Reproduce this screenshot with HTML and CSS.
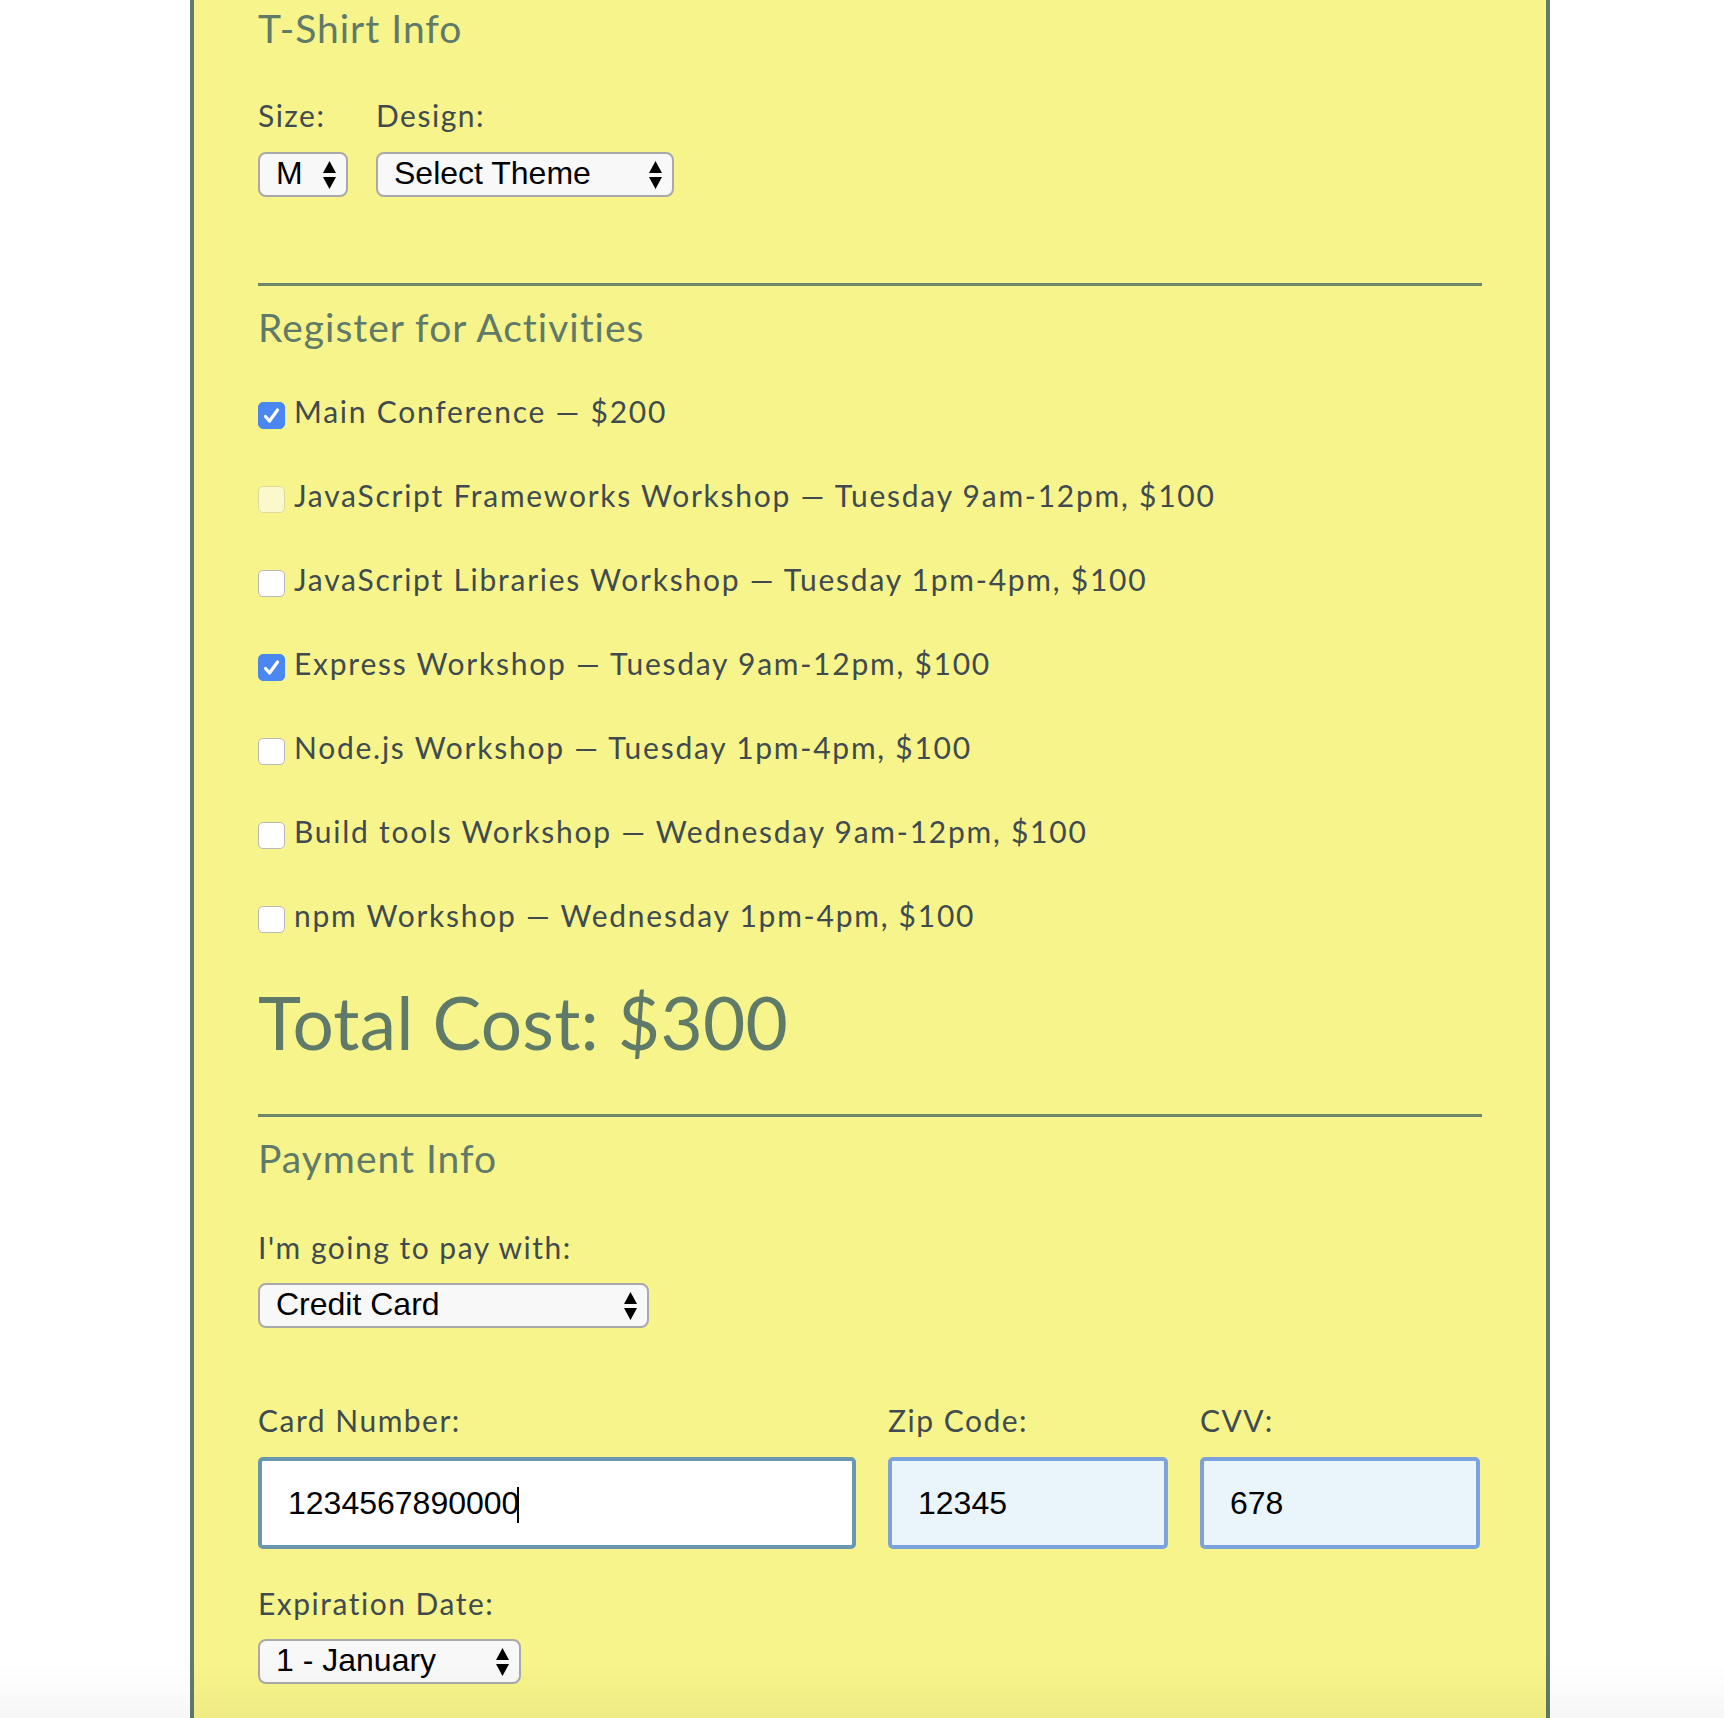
FILE: index.html
```html
<!DOCTYPE html>
<html lang="en">
<head>
<meta charset="utf-8">
<title>Registration Form</title>
<link rel="stylesheet" href="styles.css">
</head>
<body>
<form class="container">
  <div class="section">
    <h2 class="heading">T-Shirt Info</h2>
    <div class="shirt-row">
      <div class="field">
        <label class="label" for="size">Size:</label>
        <select class="select select-size" id="size"><option>M</option></select>
      </div>
      <div class="field">
        <label class="label" for="design">Design:</label>
        <select class="select select-design" id="design"><option>Select Theme</option></select>
      </div>
    </div>
  </div>

  <hr class="rule rule-first">

  <div class="section">
    <h2 class="heading">Register for Activities</h2>
    <div class="activities">
      <label class="activity"><input class="check" type="checkbox" checked><span>Main Conference — $200</span></label>
      <label class="activity"><input class="check" type="checkbox" disabled><span>JavaScript Frameworks Workshop — Tuesday 9am-12pm, $100</span></label>
      <label class="activity"><input class="check" type="checkbox"><span>JavaScript Libraries Workshop — Tuesday 1pm-4pm, $100</span></label>
      <label class="activity"><input class="check" type="checkbox" checked><span>Express Workshop — Tuesday 9am-12pm, $100</span></label>
      <label class="activity"><input class="check" type="checkbox"><span>Node.js Workshop — Tuesday 1pm-4pm, $100</span></label>
      <label class="activity"><input class="check" type="checkbox"><span>Build tools Workshop — Wednesday 9am-12pm, $100</span></label>
      <label class="activity"><input class="check" type="checkbox"><span>npm Workshop — Wednesday 1pm-4pm, $100</span></label>
    </div>
    <p class="total">Total Cost: $300</p>
  </div>

  <hr class="rule rule-second">

  <div class="section">
    <h2 class="heading">Payment Info</h2>
    <label class="label pay-label" for="payment">I'm going to pay with:</label>
    <select class="select select-payment" id="payment"><option>Credit Card</option></select>

    <div class="card-grid">
      <label class="label" for="cc-num">Card Number:</label>
      <label class="label" for="zip">Zip Code:</label>
      <label class="label" for="cvv">CVV:</label>
      <div class="input-wrap">
        <input class="text-input input-focus" id="cc-num" type="text" value="1234567890000">
        <span class="caret"></span>
      </div>
      <input class="text-input input-filled" id="zip" type="text" value="12345">
      <input class="text-input input-filled" id="cvv" type="text" value="678">
    </div>

    <label class="label exp-label" for="exp-month">Expiration Date:</label>
    <select class="select select-exp" id="exp-month"><option>1 - January</option></select>
  </div>
</form>
<div class="screen-shade"></div>
</body>
</html>
```

FILE: styles.css
```css
* {
  box-sizing: border-box;
}

html, body {
  margin: 0;
  padding: 0;
  background: #ffffff;
  height: 100%;
  overflow: hidden;
}

body {
  font-family: "Lato", "Open Sans", sans-serif;
  color: #3f4b50;
}

.container {
  width: 1360px;
  min-height: 1718px;
  margin-left: 190px;
  padding: 5px 64px 0;
  background: #f7f48b;
  border-left: 4px solid #617a6b;
  border-right: 4px solid #617a6b;
}

.heading {
  margin: 0;
  font-size: 39px;
  line-height: 46px;
  font-weight: 400;
  letter-spacing: 1px;
  color: #607a69;
}

.label {
  display: block;
  font-size: 30px;
  line-height: 36px;
  letter-spacing: 1.5px;
  color: #3f4b50;
}

.shirt-row {
  display: flex;
  gap: 28px;
  margin-top: 46px;
}

.field {
  display: flex;
  flex-direction: column;
  align-items: flex-start;
}

.select {
  appearance: none;
  -webkit-appearance: none;
  height: 45px;
  margin-top: 19px;
  padding: 0 30px 3px 16px;
  font-family: "Liberation Sans", Arial, sans-serif;
  font-size: 32px;
  letter-spacing: 0;
  color: #000;
  background-color: #f8f8f8;
  background-image: url("data:image/svg+xml;utf8,<svg xmlns='http://www.w3.org/2000/svg' width='13' height='28' viewBox='0 0 13 28'><path d='M6.5 0 L13 12 L0 12 Z M0 16 L13 16 L6.5 28 Z' fill='black'/></svg>");
  background-repeat: no-repeat;
  background-position: right 10px center;
  background-size: 13px 28px;
  border: 2px solid #a9a9a9;
  border-radius: 8px;
}

.select-size { width: 90px; }
.select-design { width: 298px; }
.select-payment { width: 391px; margin-top: 18px; }
.select-exp { width: 263px; margin-top: 18px; }

.rule {
  border: 0;
  border-top: 3px solid #6f876a;
  height: 0;
  margin: 0 0 18px;
}

.rule-first { margin-top: 86px; }
.rule-second { margin-top: 48px; }

.activities {
  display: flex;
  flex-direction: column;
  gap: 48px;
  margin-top: 43px;
}

.activity {
  display: flex;
  align-items: flex-start;
  gap: 9px;
  font-size: 30px;
  line-height: 36px;
  letter-spacing: 1.75px;
  color: #3f4b50;
}

.check {
  appearance: none;
  -webkit-appearance: none;
  flex: none;
  width: 27px;
  height: 27px;
  margin: 9px 0 0;
  border: 1.5px solid #b8b8b8;
  border-radius: 5px;
  background: #ffffff;
}

.check:checked {
  border-color: #4a87f2;
  background-color: #4a87f2;
  background-image: url("data:image/svg+xml;utf8,<svg xmlns='http://www.w3.org/2000/svg' width='27' height='27' viewBox='0 0 27 27'><path d='M7.5 14.5 L11.5 19 L19.5 8' fill='none' stroke='white' stroke-width='3.2' stroke-linecap='round' stroke-linejoin='round'/></svg>");
  background-repeat: no-repeat;
  background-position: center;
}

.check:disabled {
  background: #fbf9cc;
  border-color: #ddd9a2;
}

.total {
  margin: 45px 0 0;
  font-size: 73px;
  line-height: 88px;
  letter-spacing: 0.2px;
  color: #607a69;
}

.pay-label {
  margin-top: 48px;
}

.card-grid {
  display: grid;
  grid-template-columns: 598px 280px 280px;
  column-gap: 32px;
  row-gap: 19px;
  margin-top: 74px;
}

.input-wrap {
  position: relative;
}

.text-input {
  display: block;
  width: 100%;
  height: 92px;
  padding: 0 0 0 26px;
  font-family: "Liberation Sans", Arial, sans-serif;
  font-size: 32px;
  color: #000;
  border: 4px solid #6b96b0;
  border-radius: 5px;
  outline: none;
}

.input-focus {
  background: #ffffff;
}

.input-filled {
  background: #eaf5fb;
  border-color: #7ba2dc;
}

.caret {
  position: absolute;
  left: 259px;
  top: 30px;
  width: 2px;
  height: 36px;
  background: #000;
}

.exp-label {
  margin-top: 36px;
}

.screen-shade {
  position: fixed;
  left: 0;
  right: 0;
  bottom: 0;
  height: 60px;
  background: linear-gradient(rgba(0, 0, 0, 0), rgba(0, 0, 0, 0.03));
  pointer-events: none;
}
```
